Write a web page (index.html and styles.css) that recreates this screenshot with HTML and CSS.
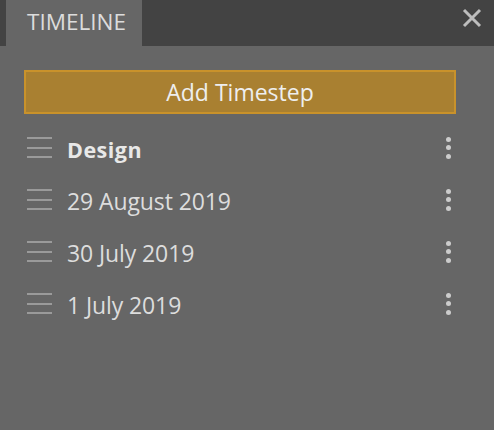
FILE: index.html
```html
<!DOCTYPE html>
<html>
<head>
<meta charset="utf-8">
<link rel="stylesheet" href="styles.css">
</head>
<body>
<div class="panel">
  <div class="topbar">
    <div class="tab">TIMELINE</div>
    <div class="close">
      <svg width="20" height="20" viewBox="0 0 20 20"><path d="M2 2 L18 18 M18 2 L2 18" stroke="#bdbdbd" stroke-width="3" stroke-linecap="butt"/></svg>
    </div>
  </div>
  <div class="content">
    <button class="add">Add Timestep</button>
    <ul class="list">
      <li class="row">
        <span class="handle"><i></i><i></i><i></i></span>
        <span class="label bold">Design</span>
        <span class="more"><i></i><i></i><i></i></span>
      </li>
      <li class="row">
        <span class="handle"><i></i><i></i><i></i></span>
        <span class="label">29 August 2019</span>
        <span class="more"><i></i><i></i><i></i></span>
      </li>
      <li class="row">
        <span class="handle"><i></i><i></i><i></i></span>
        <span class="label">30 July 2019</span>
        <span class="more"><i></i><i></i><i></i></span>
      </li>
      <li class="row">
        <span class="handle"><i></i><i></i><i></i></span>
        <span class="label">1 July 2019</span>
        <span class="more"><i></i><i></i><i></i></span>
      </li>
    </ul>
  </div>
</div>
</body>
</html>
```
FILE: styles.css
```css
html, body {
  margin: 0;
  padding: 0;
  background: #666666;
}
.panel {
  width: 494px;
  height: 430px;
  background: #666666;
  font-family: "Open Sans", "Noto Sans", sans-serif;
  color: #e0e0e0;
}
.topbar {
  height: 46px;
  background: #434343;
  display: flex;
  align-items: stretch;
  padding-left: 6px;
}
.tab {
  width: 136px;
  background: #666666;
  color: #dcdcdc;
  font-size: 22.5px;
  display: flex;
  align-items: center;
  padding-left: 21px;
  padding-bottom: 3px;
  box-sizing: border-box;
}
.close {
  margin-left: auto;
  width: 44px;
  display: flex;
  align-items: center;
  justify-content: center;
  padding-bottom: 10px;
}
.content {
  padding: 24px 38px 0 24px;
}
.add {
  display: block;
  width: 432px;
  height: 44px;
  background: #a98031;
  border: 2px solid #c9922b;
  color: #eeeeee;
  font-family: inherit;
  font-size: 23px;
  padding: 0 0 1px 0;
  margin: 0;
}
.list {
  list-style: none;
  margin: 9px 0 0 0;
  padding: 0;
}
.row {
  height: 52px;
  display: flex;
  align-items: center;
}
.handle {
  width: 25px;
  margin-left: 3px;
  margin-right: 15px;
  display: flex;
  flex-direction: column;
  gap: 7.2px;
  margin-top: -3px;
}
.handle i {
  display: block;
  height: 2px;
  background: #9a9a9a;
}
.label {
  font-size: 23px;
  color: #dddddd;
  flex: 1;
  letter-spacing: -0.1px;
}
.label.bold {
  font-size: 21.5px;
  font-weight: 700;
  color: #e8e8e8;
  letter-spacing: 0.5px;
}
.more {
  width: 10px;
  margin-right: 3px;
  margin-top: -3px;
  display: flex;
  flex-direction: column;
  align-items: center;
  gap: 3.5px;
}
.more i {
  display: block;
  width: 5px;
  height: 5px;
  border-radius: 50%;
  background: #cccccc;
}
```
